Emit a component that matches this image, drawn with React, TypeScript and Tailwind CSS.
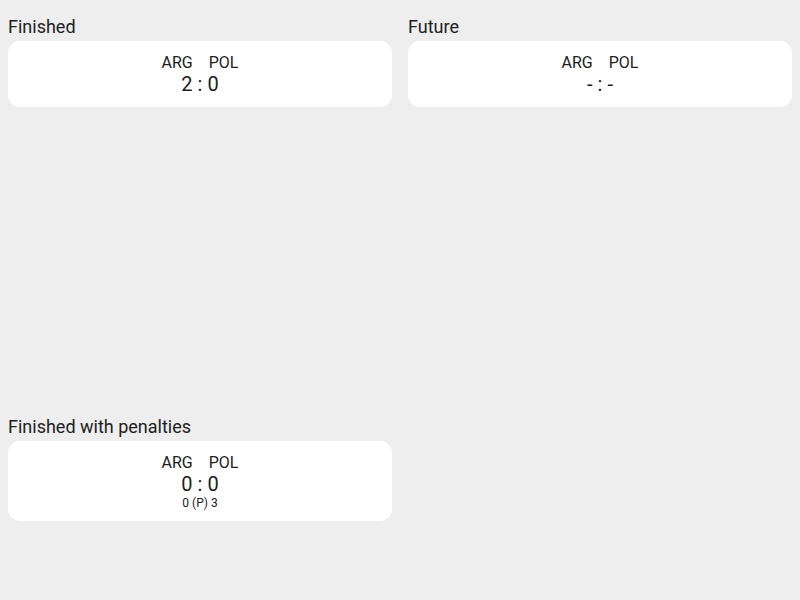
import React from 'react';

interface Match {
  title: string;
  home: string;
  away: string;
  homeScore?: number;
  awayScore?: number;
  penalties?: [number, number];
}

const matches: (Match | null)[] = [
  { title: 'Finished', home: 'ARG', away: 'POL', homeScore: 2, awayScore: 0 },
  { title: 'Future', home: 'ARG', away: 'POL' },
  { title: 'Finished with penalties', home: 'ARG', away: 'POL', homeScore: 0, awayScore: 0, penalties: [0, 3] },
  null,
];

const MatchCard: React.FC<{ match: Match }> = ({ match }) => {
  const score = (n?: number) => (n === undefined ? '-' : n);
  return (
    <div className="bg-white rounded-xl pt-3 pb-[11px] flex flex-col items-center">
      <div className="flex gap-4 text-[16px] leading-[19px]">
        <span>{match.home}</span>
        <span>{match.away}</span>
      </div>
      <div className="text-[20px] leading-[24px]">
        {score(match.homeScore)} : {score(match.awayScore)}
      </div>
      {match.penalties && (
        <div className="text-[12px] leading-[14px]">
          {match.penalties[0]} (P) {match.penalties[1]}
        </div>
      )}
    </div>
  );
};

export default function App() {
  return (
    <div
      className="h-screen overflow-hidden bg-[#eeeeee] text-[#212121] grid grid-cols-2 grid-rows-[400px_1fr]"
      style={{ fontFamily: 'Roboto, "Liberation Sans", sans-serif' }}
    >
      {matches.map((match, i) => (
        <div key={i} className="p-2">
          {match && (
            <>
              <h2 className="mt-2 mb-1 text-[18px] leading-[21px]">{match.title}</h2>
              <MatchCard match={match} />
            </>
          )}
        </div>
      ))}
    </div>
  );
}
